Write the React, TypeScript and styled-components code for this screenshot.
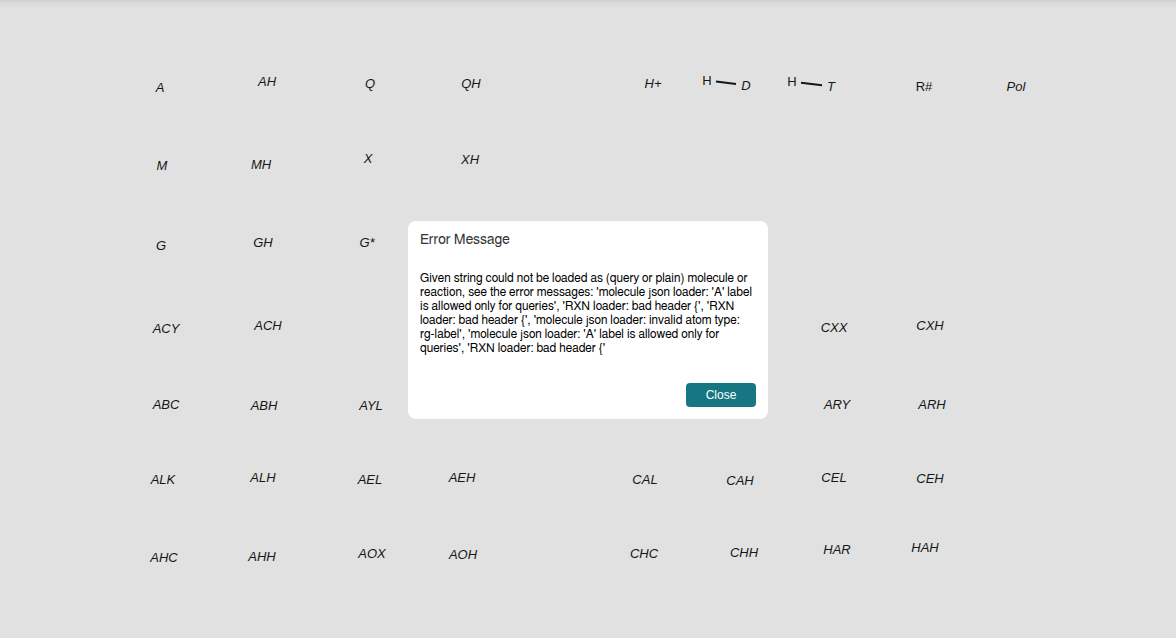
import React from "react";
import styled, { createGlobalStyle } from "styled-components";

const GlobalStyle = createGlobalStyle`
  * { box-sizing: border-box; }
  body { margin: 0; background: #e1e1e1; font-family: "Liberation Sans", Arial, sans-serif; }
`;

const Page = styled.div`
  position: relative;
  min-height: 100vh;
  display: grid;
  place-items: center;
  overflow: hidden;
  background: linear-gradient(#cfcfcf, #dadada 3px, #e1e1e1 8px);
`;

const Canvas = styled.div`
  position: absolute;
  inset: 0;
`;

const Atom = styled.span<{ $x: number; $y: number; $plain?: boolean }>`
  position: absolute;
  left: ${(p) => p.$x - 24}px;
  top: ${(p) => p.$y - 8}px;
  width: 48px;
  text-align: center;
  font-size: 13px;
  line-height: 16px;
  font-style: ${(p) => (p.$plain ? "normal" : "italic")};
  color: #161616;
`;

const Bonds = styled.svg`
  position: absolute;
  left: 0;
  top: 0;
  width: 100%;
  height: 100%;
  stroke: #161616;
  stroke-width: 2;
`;

const Dialog = styled.section`
  position: relative;
  width: 360px;
  margin-top: 2px;
  padding: 8px 12px 12px;
  display: flex;
  flex-direction: column;
  border-radius: 8px;
  background: #fff;
`;

const Title = styled.h1`
  margin: 0 0 20px;
  font-family: FreeSans, "Nimbus Sans", "Liberation Sans", sans-serif;
  font-size: 14px;
  line-height: 22px;
  font-weight: 400;
  font-kerning: none;
  color: #333;
`;

const Message = styled.p`
  margin: 0 0 28px;
  font-family: FreeSans, "Nimbus Sans", "Liberation Sans", sans-serif;
  font-size: 12px;
  line-height: 14px;
  font-kerning: none;
  white-space: pre;
  color: #000;
`;

const CloseButton = styled.button`
  align-self: flex-end;
  width: 70px;
  height: 24px;
  padding: 0;
  border: 0;
  border-radius: 4px;
  background: #167782;
  color: #fff;
  font: 12px "Liberation Sans", Arial, sans-serif;
  cursor: pointer;
`;

type AtomData = [label: string, x: number, y: number, plain?: boolean];

const atoms: AtomData[] = [
  ["A", 160, 88], ["AH", 267, 82], ["Q", 370, 84], ["QH", 471, 84],
  ["H+", 653, 84], ["H", 707, 81, true], ["D", 746, 86],
  ["H", 792, 82, true], ["T", 831, 87], ["R#", 924, 87, true], ["Pol", 1016, 87],
  ["M", 162, 166], ["MH", 261, 165], ["X", 368, 159], ["XH", 470, 160],
  ["G", 161, 246], ["GH", 263, 243], ["G*", 367, 243],
  ["ACY", 166, 329], ["ACH", 268, 326], ["CXX", 834, 328], ["CXH", 930, 326],
  ["ABC", 166, 405], ["ABH", 264, 406], ["AYL", 371, 406], ["ARY", 837, 405], ["ARH", 932, 405],
  ["ALK", 163, 480], ["ALH", 263, 478], ["AEL", 370, 480], ["AEH", 462, 478],
  ["CAL", 645, 480], ["CAH", 740, 481], ["CEL", 834, 478], ["CEH", 930, 479],
  ["AHC", 164, 558], ["AHH", 262, 557], ["AOX", 372, 554], ["AOH", 463, 555],
  ["CHC", 644, 554], ["CHH", 744, 553], ["HAR", 837, 550], ["HAH", 925, 548],
];

const errorMessage = `Given string could not be loaded as (query or plain) molecule or
reaction, see the error messages: 'molecule json loader: 'A' label
is allowed only for queries', 'RXN loader: bad header {', 'RXN
loader: bad header {', 'molecule json loader: invalid atom type:
rg-label', 'molecule json loader: 'A' label is allowed only for
queries', 'RXN loader: bad header {'`;

export default function App() {
  return (
    <>
      <GlobalStyle />
      <Page>
        <Canvas>
          <Bonds aria-hidden="true">
            <line x1="716" y1="81.5" x2="736" y2="84" />
            <line x1="801" y1="82.8" x2="822" y2="85.2" />
          </Bonds>
          {atoms.map(([label, x, y, plain]) => (
            <Atom key={`${label}-${x}`} $x={x} $y={y} $plain={plain}>
              {label}
            </Atom>
          ))}
        </Canvas>
        <Dialog role="dialog" aria-modal="true" aria-labelledby="error-title">
          <Title id="error-title">Error Message</Title>
          <Message>{errorMessage}</Message>
          <CloseButton type="button">Close</CloseButton>
        </Dialog>
      </Page>
    </>
  );
}
